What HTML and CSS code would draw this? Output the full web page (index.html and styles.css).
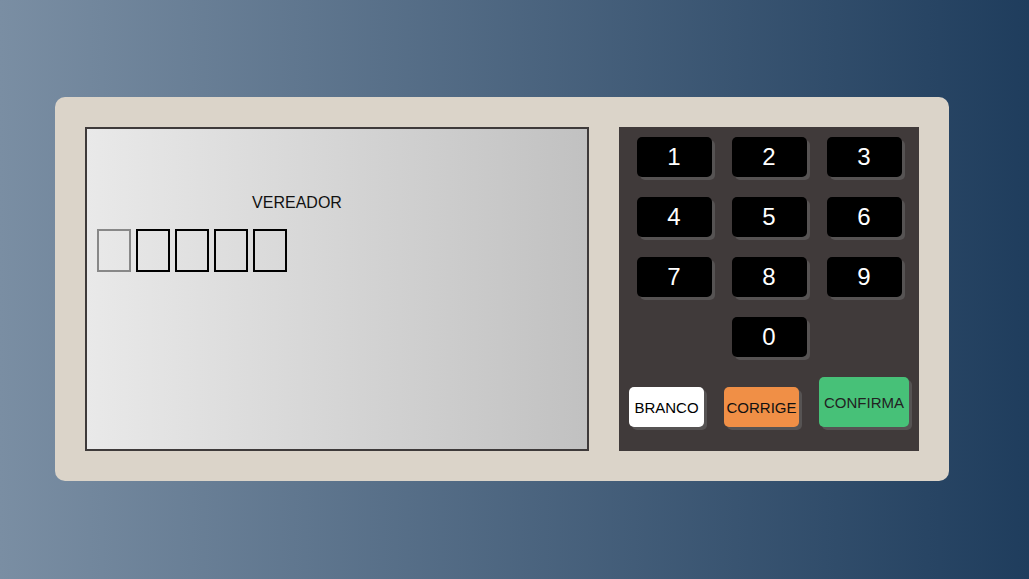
FILE: index.html
```html
<!DOCTYPE html>
<html lang="pt">
<head>
<meta charset="utf-8">
<title>Urna</title>
<link rel="stylesheet" href="styles.css">
</head>
<body>
<div class="urna">
  <div class="tela">
    <div class="info">
      <div class="cargo">VEREADOR</div>
      <div class="numeros">
        <div class="numero pisca"></div>
        <div class="numero"></div>
        <div class="numero"></div>
        <div class="numero"></div>
        <div class="numero"></div>
      </div>
    </div>
  </div>
  <div class="teclado">
    <div class="linha">
      <div class="tecla">1</div>
      <div class="tecla">2</div>
      <div class="tecla">3</div>
    </div>
    <div class="linha">
      <div class="tecla">4</div>
      <div class="tecla">5</div>
      <div class="tecla">6</div>
    </div>
    <div class="linha">
      <div class="tecla">7</div>
      <div class="tecla">8</div>
      <div class="tecla">9</div>
    </div>
    <div class="linha">
      <div class="tecla">0</div>
    </div>
    <div class="linha acoes">
      <div class="botao branco">BRANCO</div>
      <div class="botao corrige">CORRIGE</div>
      <div class="botao confirma">CONFIRMA</div>
    </div>
  </div>
</div>
</body>
</html>
```
FILE: styles.css
```css
html, body {
  margin: 0;
  height: 100%;
}
body {
  background: linear-gradient(to right, #7a8ea3, #1f3d5d);
  display: flex;
  align-items: flex-start;
  padding: 97px 0 0 55px;
  box-sizing: border-box;
  font-family: "Liberation Sans", Arial, sans-serif;
}
.urna {
  width: 894px;
  height: 384px;
  box-sizing: border-box;
  background: #dbd4c9;
  border-radius: 10px;
  padding: 30px;
  display: flex;
  gap: 30px;
}
.tela {
  width: 504px;
  height: 324px;
  box-sizing: border-box;
  border: 2px solid #3e3a3a;
  background: linear-gradient(to right, #e9e9e9, #c1c1c1);
}
.info {
  width: 400px;
  padding: 65px 0 0 10px;
}
.cargo {
  font-size: 16px;
  line-height: 18px;
  text-align: center;
  color: #111;
}
.numeros {
  display: flex;
  gap: 5px;
  margin-top: 17px;
}
.numero {
  width: 34px;
  height: 43px;
  box-sizing: border-box;
  border: 2px solid #000;
}
.numero.pisca {
  border-color: #888;
}
.teclado {
  width: 300px;
  height: 324px;
  box-sizing: border-box;
  background: #403a3a;
  padding-top: 10px;
  display: flex;
  flex-direction: column;
  align-items: center;
  gap: 20px;
}
.linha {
  display: flex;
  gap: 20px;
}
.tecla {
  width: 75px;
  height: 40px;
  background: #000;
  color: #fff;
  font-size: 24px;
  border-radius: 5px;
  box-shadow: 3px 3px 0 #565353;
  display: flex;
  align-items: center;
  justify-content: center;
}
.acoes {
  align-items: flex-end;
}
.botao {
  width: 75px;
  height: 40px;
  border-radius: 5px;
  box-shadow: 3px 3px 0 #565353;
  font-size: 15px;
  color: #111;
  display: flex;
  align-items: center;
  justify-content: center;
  white-space: nowrap;
}
.branco {
  background: #fff;
  color: #000;
}
.corrige {
  background: #f08f46;
}
.confirma {
  width: 90px;
  height: 50px;
  background: #47c178;
  color: #222;
}
```
